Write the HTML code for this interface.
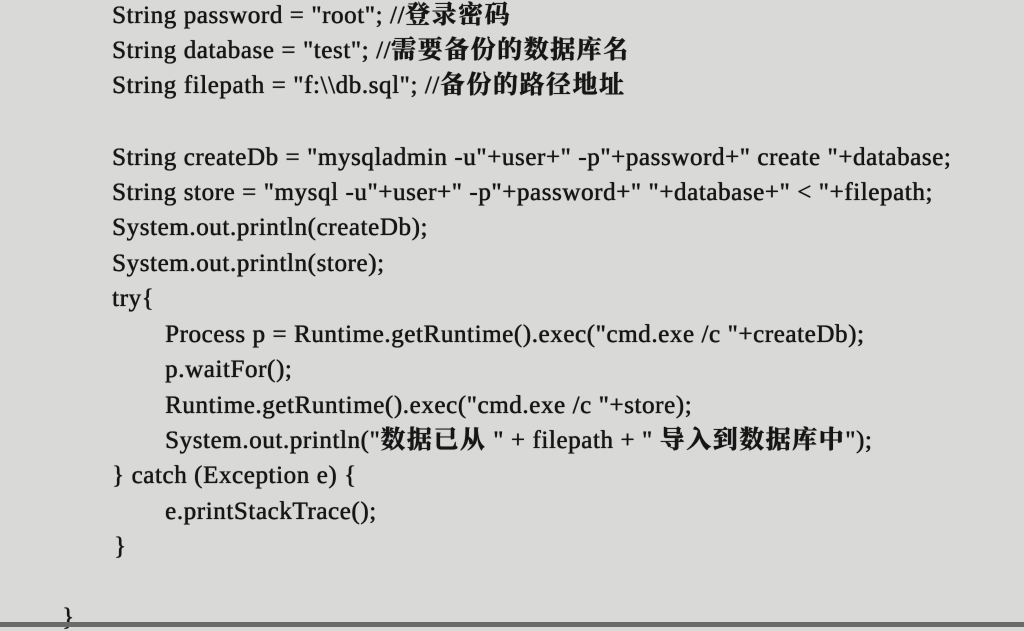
<!DOCTYPE html>
<html><head><meta charset="utf-8"><style>
html,body{margin:0;padding:0}
body{width:1024px;height:627px;background:#d9d9d7;position:relative;overflow:hidden;font-family:"Liberation Serif","Noto Serif CJK SC",serif;color:#161616}
.l{position:absolute;font-size:25px;white-space:pre;line-height:1;text-shadow:0.4px 0 0 #161616,0 0 0.8px #161616;letter-spacing:0.6px}
.c{letter-spacing:1.5px;font-weight:bold}
.b{position:absolute;left:0;top:622px;width:1024px;height:5px;background:#6a6a6a}
</style></head><body>
<div class="l" style="left:112px;top:3px">String password = "root"; //<span class="c">登录密码</span></div>
<div class="l" style="left:112px;top:38px">String database = "test"; //<span class="c">需要备份的数据库名</span></div>
<div class="l" style="left:112px;top:73px">String filepath = "f:\\db.sql"; //<span class="c">备份的路径地址</span></div>
<div class="l" style="left:112px;top:145px">String createDb = "mysqladmin -u"+user+" -p"+password+" create "+database;</div>
<div class="l" style="left:112px;top:180px">String store = "mysql -u"+user+" -p"+password+" "+database+" &lt; "+filepath;</div>
<div class="l" style="left:112px;top:215px">System.out.println(createDb);</div>
<div class="l" style="left:112px;top:251px">System.out.println(store);</div>
<div class="l" style="left:112px;top:286px">try{</div>
<div class="l" style="left:165px;top:322px">Process p = Runtime.getRuntime().exec("cmd.exe /c "+createDb);</div>
<div class="l" style="left:165px;top:357px">p.waitFor();</div>
<div class="l" style="left:165px;top:393px">Runtime.getRuntime().exec("cmd.exe /c "+store);</div>
<div class="l" style="left:165px;top:428px">System.out.println("<span class="c">数据已从</span> " + filepath + " <span class="c">导入到数据库中</span>");</div>
<div class="l" style="left:112px;top:463px">} catch (Exception e) {</div>
<div class="l" style="left:165px;top:499px">e.printStackTrace();</div>
<div class="l" style="left:114px;top:534px">}</div>
<div class="l" style="left:62px;top:605px">}</div>
<div class="b"></div>
</body></html>
